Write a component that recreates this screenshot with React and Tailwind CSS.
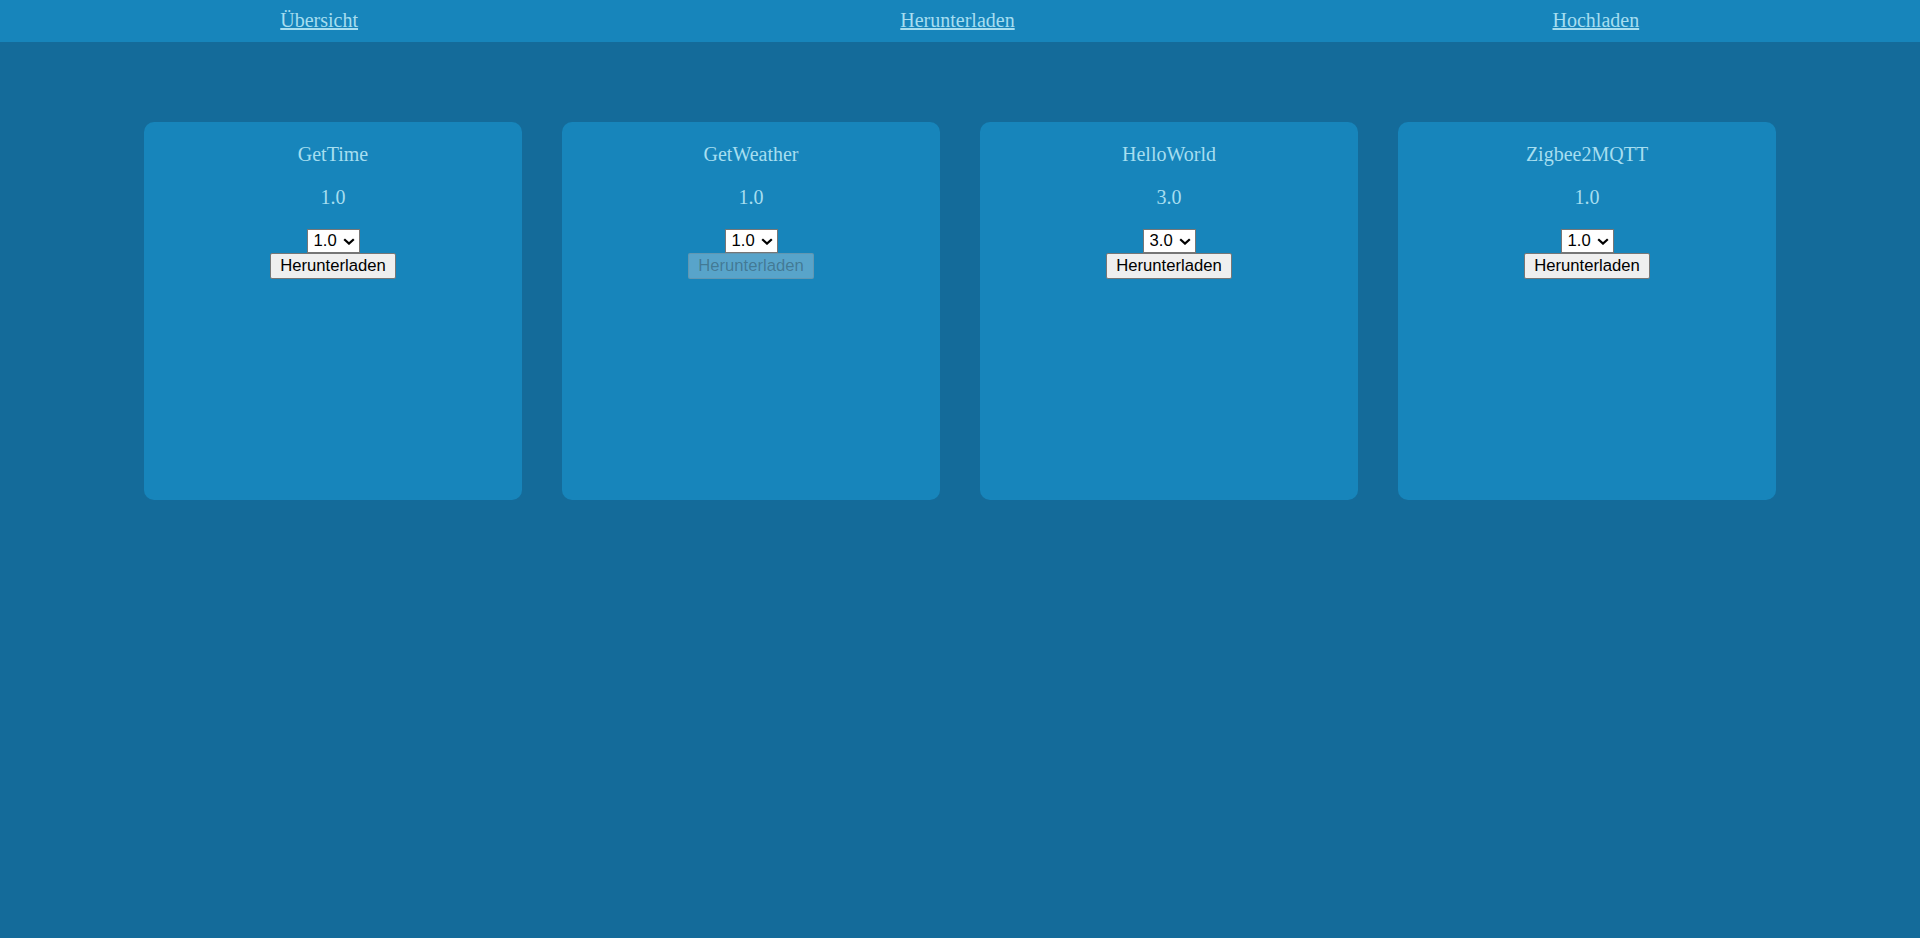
import { useState } from "react";

const PLUGINS = [
  { name: "GetTime", version: "1.0", versions: ["1.0"] },
  { name: "GetWeather", version: "1.0", versions: ["1.0"], disabled: true },
  { name: "HelloWorld", version: "3.0", versions: ["3.0", "2.0", "1.0"] },
  { name: "Zigbee2MQTT", version: "1.0", versions: ["1.0"] },
];

const NAV = ["Übersicht", "Herunterladen", "Hochladen"];

function PluginCard({ plugin }) {
  const [selected, setSelected] = useState(plugin.versions[0]);

  return (
    <div className="w-[378px] h-[378px] rounded-[10px] bg-[#1785bb] flex flex-col items-center pt-[21px]">
      <p className="text-[20px] leading-[23px] text-[#a6def0]">{plugin.name}</p>
      <p className="mt-[20px] text-[20px] leading-[23px] text-[#a6def0]">
        {plugin.version}
      </p>
      <div className="relative mt-[20px]">
        <select
          value={selected}
          onChange={(e) => setSelected(e.target.value)}
          className="appearance-none w-[53px] h-[24px] bg-white text-black border border-[#767676] text-[16.67px] leading-[20px] font-['Liberation_Sans',Arial,sans-serif] pl-[6px] pr-[18px]"
        >
          {plugin.versions.map((v) => (
            <option key={v} value={v}>
              {v}
            </option>
          ))}
        </select>
        <svg
          className="pointer-events-none absolute right-[5px] top-[9px]"
          width="12"
          height="7"
          viewBox="0 0 12 7"
          fill="none"
        >
          <path d="M1.2 1.2 6 5.6 10.8 1.2" stroke="#000" strokeWidth="2.2" />
        </svg>
      </div>
      <button
        disabled={plugin.disabled}
        className={`h-[26px] px-[9.5px] rounded-[2px] border text-[16.67px] leading-[20px] font-['Liberation_Sans',Arial,sans-serif] ${
          plugin.disabled
            ? "bg-[rgba(239,239,239,0.3)] border-[rgba(118,118,118,0.3)] text-[rgba(16,16,16,0.3)]"
            : "bg-[#efefef] border-[#767676] text-black"
        }`}
      >
        Herunterladen
      </button>
    </div>
  );
}

export default function App() {
  return (
    <div className="min-h-screen bg-[#146b9a] font-['Liberation_Serif','Times_New_Roman',serif]">
      <nav className="h-[42px] bg-[#1785bb]">
        <div className="w-[1915px] h-full flex items-center">
          {NAV.map((label) => (
            <div key={label} className="flex-1 text-center">
              <a
                href="#"
                className="text-[20px] leading-[23px] text-[#a6def0] underline"
              >
                {label}
              </a>
            </div>
          ))}
        </div>
      </nav>

      {/* Plugin list */}
      <div className="pt-[80px] flex justify-center gap-[40px]">
        {PLUGINS.map((p) => (
          <PluginCard key={p.name} plugin={p} />
        ))}
      </div>
    </div>
  );
}
